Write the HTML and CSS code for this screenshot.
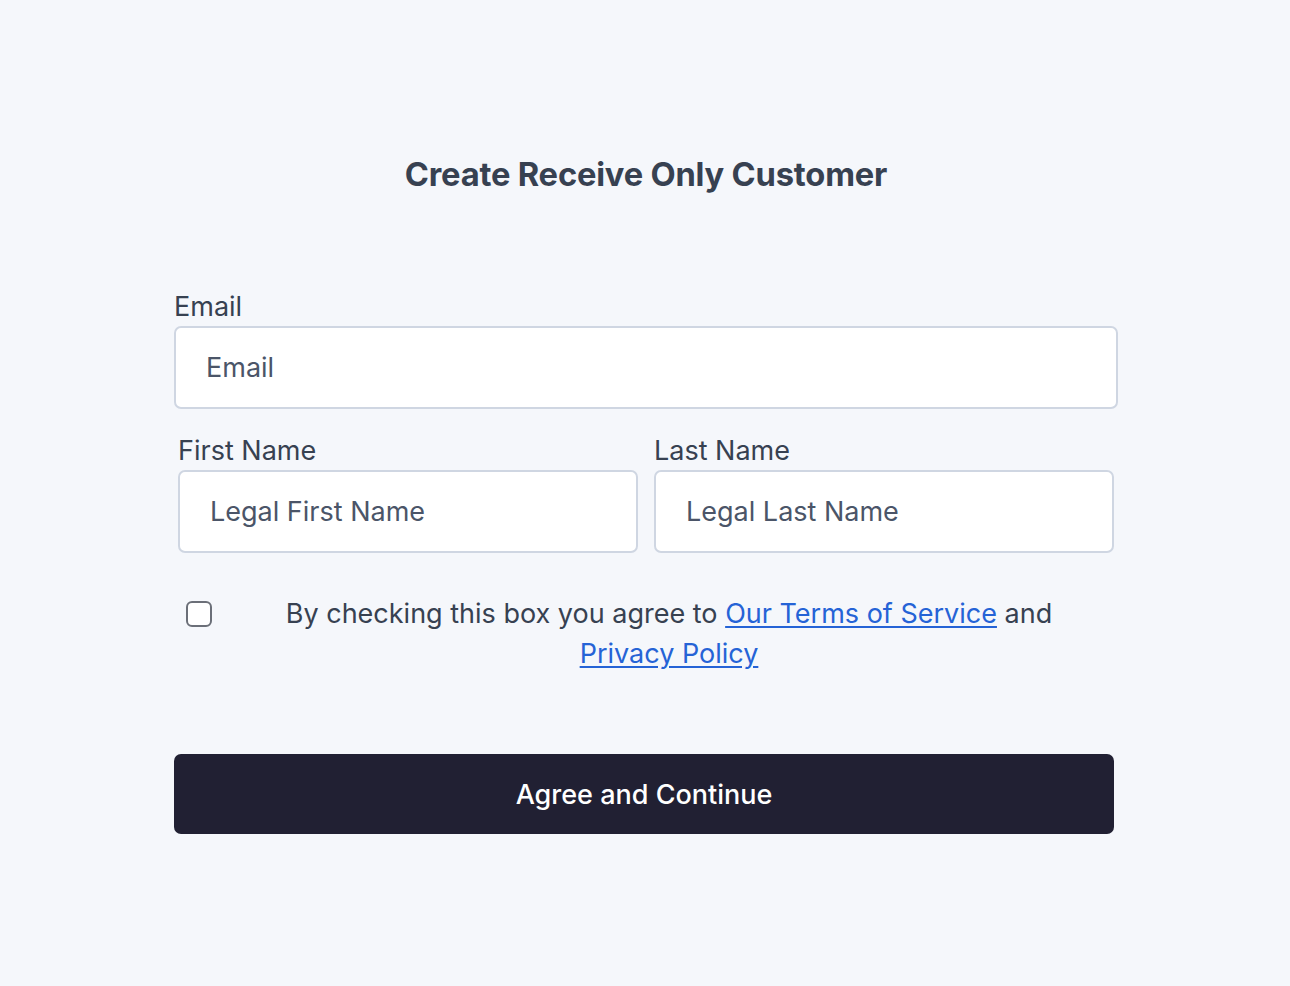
FILE: index.html
```html
<!DOCTYPE html>
<html lang="en">
<head>
<meta charset="utf-8">
<title>Create Receive Only Customer</title>
<link rel="stylesheet" href="styles.css">
</head>
<body>
<main class="page">
  <h1 class="title">Create Receive Only Customer</h1>
  <form class="form">
    <div class="field field-email">
      <label class="label" for="email">Email</label>
      <input class="input" id="email" type="text" placeholder="Email">
    </div>
    <div class="row">
      <div class="field">
        <label class="label" for="first">First Name</label>
        <input class="input" id="first" type="text" placeholder="Legal First Name">
      </div>
      <div class="field">
        <label class="label" for="last">Last Name</label>
        <input class="input" id="last" type="text" placeholder="Legal Last Name">
      </div>
    </div>
    <div class="agree">
      <div class="check-wrap"><input class="check" type="checkbox"></div>
      <p class="agree-text">By checking this box you agree to <a href="#">Our Terms of Service</a> and <a href="#">Privacy Policy</a></p>
    </div>
    <button type="button" class="btn">Agree and Continue</button>
  </form>
</main>
</body>
</html>
```
FILE: styles.css
```css
* { box-sizing: border-box; }
html, body { margin: 0; padding: 0; }
body {
  background: #f5f7fb;
  font-family: Inter, "Noto Sans", sans-serif;
  color: #374151;
}
.page {
  width: 944px;
  margin: 0 auto;
  padding-top: 153px;
  position: relative;
  left: 1px;
}
.title {
  margin: 0;
  text-align: center;
  font-size: 32.7px;
  line-height: 42px;
  font-weight: 700;
  color: #374151;
  letter-spacing: -0.2px;
}
.form {
  margin-top: 95px;
  display: flex;
  flex-direction: column;
}
.field { display: flex; flex-direction: column; min-width: 0; }
.label {
  font-size: 27px;
  line-height: 34px;
  color: #374151;
  margin-bottom: 2px;
}
.input {
  width: 100%;
  min-width: 0;
  height: 83px;
  border: 2px solid #cfd6e2;
  border-radius: 7px;
  background: #fff;
  font-family: inherit;
  font-size: 27px;
  padding: 0 30px;
  color: #4b5568;
  outline: none;
}
.input::placeholder { color: #4b5568; opacity: 1; }
.row {
  display: grid;
  grid-template-columns: minmax(0, 1fr) minmax(0, 1fr);
  gap: 16px;
  padding: 0 4px;
  margin-top: 25px;
}
.agree {
  display: flex;
  align-items: flex-start;
  margin-top: 41px;
  padding-right: 4px;
}
.check-wrap { width: 50px; flex: none; padding-left: 12px; padding-top: 7px; }
.check {
  appearance: none;
  -webkit-appearance: none;
  width: 26px;
  height: 26px;
  margin: 0;
  border: 2px solid #6b6f78;
  border-radius: 6px;
  background: #fff;
}
.agree-text {
  flex: 1;
  margin: 0;
  padding: 0 40px;
  text-align: center;
  font-size: 27px;
  line-height: 40px;
  color: #374151;
}
.agree-text a { color: #2563d6; text-decoration: underline; text-underline-offset: 3px; }
.btn {
  margin-top: 80px;
  width: 940px;
  height: 80px;
  border: 0;
  border-radius: 7px;
  background: #212033;
  color: #fff;
  font-family: inherit;
  font-size: 27px;
  font-weight: 500;
}
```
